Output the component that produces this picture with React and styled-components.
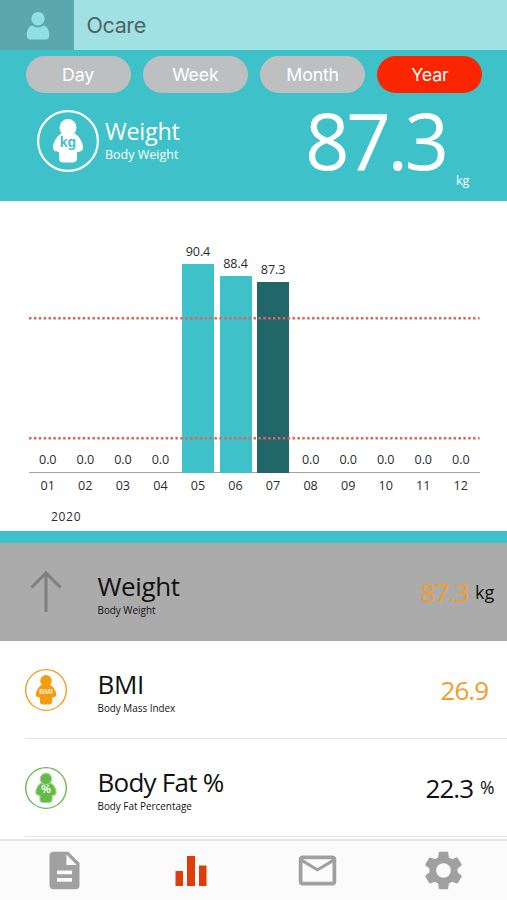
import React, { useState } from "react";
import styled, { createGlobalStyle } from "styled-components";

const tabs = ["Day", "Week", "Month", "Year"];

const months = [
  { month: "01", value: 0 },
  { month: "02", value: 0 },
  { month: "03", value: 0 },
  { month: "04", value: 0 },
  { month: "05", value: 90.4, height: 209 },
  { month: "06", value: 88.4, height: 197.5 },
  { month: "07", value: 87.3, height: 191 },
  { month: "08", value: 0 },
  { month: "09", value: 0 },
  { month: "10", value: 0 },
  { month: "11", value: 0 },
  { month: "12", value: 0 },
];

function BodyIcon({ size, color, textColor, label, fontSize, stroke, textY, halo }) {
  return (
    <svg width={size} height={size} viewBox="0 0 62 62">
      <circle cx="31" cy="31" r={31 - stroke / 2} fill="none" stroke={color} strokeWidth={stroke} />
      <g fill={color} stroke={halo} strokeWidth={halo ? 1.6 : 0}>
        <path d="M24 23.500C19 27 16 33 16 37.500c0 3 2 4.300 6 4.500V48c0 3 1.500 4.500 4.500 4.500h9c3 0 4.500-1.500 4.500-4.500v-6c4-.2 6-1.500 6-4.500 0-4.500-3-10.500-8-14z" />
        <circle cx="31" cy="17.500" r="8.500" />
      </g>
      <text
        x="31"
        y={textY}
        textAnchor="middle"
        fontFamily="Liberation Sans, sans-serif"
        fontWeight="700"
        fontSize={fontSize}
        fill={textColor}
      >
        {label}
      </text>
    </svg>
  );
}

function Ocare() {
  const [activeTab, setActiveTab] = useState("Year");

  return (
    <Screen>
      <GlobalStyle />
      <Header>
        <Avatar>
          <svg width="24" height="28" viewBox="0 0 24 28">
            <circle cx="12" cy="6.700" r="6.700" fill="#8fe0e4" />
            <path
              d="M6.500 13.500c3.300 2.600 7.700 2.600 11 0 3.700.6 5.700 4.500 5.700 9.500 0 3.200-1.200 4.500-3.700 4.500h-15c-2.500 0-3.700-1.300-3.700-4.500 0-5 2-8.900 5.700-9.500z"
              fill="#8fe0e4"
            />
          </svg>
        </Avatar>
        <UserName>Ocare</UserName>
      </Header>

      <Summary>
        <Tabs>
          {tabs.map((tab) => (
            <Tab key={tab} $active={activeTab === tab} onClick={() => setActiveTab(tab)}>
              {tab}
            </Tab>
          ))}
        </Tabs>
        <Current>
          <BodyIcon size={62} color="#fff" textColor="#3fc1c9" label="kg" fontSize={14} stroke={2.200} textY={36.500} />
          <CurrentName>
            <h2>Weight</h2>
            <p>Body Weight</p>
          </CurrentName>
          <CurrentValue>87.3</CurrentValue>
          <CurrentUnit>kg</CurrentUnit>
        </Current>
      </Summary>

      <Chart>
        <Plot>
          {months.map((item) => (
            <Column key={item.month}>
              <BarValue>{item.value.toFixed(1)}</BarValue>
              {item.value > 0 && <Bar $current={item.month === "07"} style={{ height: item.height }} />}
            </Column>
          ))}
          <Limits viewBox="0 0 451 237">
            <path d="M0 83.300H450.500M0 203.300H450.500" />
          </Limits>
        </Plot>
        <Axis>
          {months.map((item) => (
            <span key={item.month}>{item.month}</span>
          ))}
        </Axis>
        <YearLabel>2020</YearLabel>
      </Chart>

      <List>
        <Row $selected>
          <RowIcon>
            <svg width="32" height="42" viewBox="0 0 32 42" fill="none" stroke="#7f7f7f" strokeWidth="3">
              <path d="M16 41V2M1.500 16.500L16 2l14.500 14.500" />
            </svg>
          </RowIcon>
          <RowName>
            <h3>Weight</h3>
            <p>Body Weight</p>
          </RowName>
          <Value $warn>87.3</Value>
          <Unit>kg</Unit>
        </Row>
        <Row>
          <RowIcon>
            <BodyIcon size={42} color="#f39c12" textColor="#fde9c8" label="BMI" fontSize={11} stroke={2} textY={37} />
          </RowIcon>
          <RowName>
            <h3>BMI</h3>
            <p>Body Mass Index</p>
          </RowName>
          <Value $warn $noUnit>26.9</Value>
        </Row>
        <Row>
          <RowIcon>
            <BodyIcon size={42} color="#62bb46" textColor="#fff" label="%" fontSize={16} stroke={2} textY={38} halo="#a5d898" />
          </RowIcon>
          <RowName $tight>
            <h3>Body Fat %</h3>
            <p>Body Fat Percentage</p>
          </RowName>
          <Value>22.3</Value>
          <Unit $small>%</Unit>
        </Row>
      </List>

      <NavBar>
        <NavItem>
          <svg width="45" height="45" viewBox="0 0 24 24">
            <path d="M14 2H6c-1.100 0-2 .9-2 2v16c0 1.100.9 2 2 2h12c1.100 0 2-.9 2-2V8l-6-6zm2 16H8v-2h8v2zm0-4H8v-2h8v2zm-3-5V3.500L18.500 9H13z" />
          </svg>
        </NavItem>
        <NavItem $active>
          <svg width="32" height="32" viewBox="0 0 32 32">
            <path d="M.5 16h7.500v15H.5zM12 1h8v30h-8zM24 10.500h7.500V31H24z" />
          </svg>
        </NavItem>
        <NavItem>
          <svg width="45" height="45" viewBox="0 0 24 24">
            <path d="M20 4H4c-1.100 0-2 .9-2 2v12c0 1.100.9 2 2 2h16c1.100 0 2-.9 2-2V6c0-1.100-.9-2-2-2zm0 14H4V7.800l8 4.700 8-4.700V18zM12 10.800L4.300 6h15.400L12 10.800z" />
          </svg>
        </NavItem>
        <NavItem>
          <svg width="45" height="45" viewBox="0 0 24 24">
            <path
              fillRule="evenodd"
              d="M19.430 12.980c.04-.32.07-.64.07-.98s-.03-.66-.07-.98l2.110-1.650c.19-.15.24-.42.12-.64l-2-3.460c-.12-.22-.39-.3-.61-.22l-2.490 1c-.52-.4-1.080-.73-1.690-.98l-.38-2.650C14.460 2.180 14.250 2 14 2h-4c-.25 0-.46.18-.49.42l-.38 2.650c-.61.25-1.170.59-1.690.98l-2.490-1c-.23-.09-.49 0-.61.22l-2 3.460c-.13.22-.07.49.12.64l2.110 1.650c-.04.32-.07.65-.07.98s.03.66.07.98l-2.110 1.650c-.19.15-.24.42-.12.64l2 3.460c.12.22.39.3.61.22l2.490-1c.52.4 1.080.73 1.690.98l.38 2.650c.03.24.24.42.49.42h4c.25 0 .46-.18.49-.42l.38-2.650c.61-.25 1.170-.59 1.690-.98l2.490 1c.23.09.49 0 .61-.22l2-3.460c.12-.22.07-.49-.12-.64l-2.110-1.650zM12 8.100a3.900 3.900 0 1 0 0 7.800 3.900 3.900 0 0 0 0-7.800z"
            />
          </svg>
        </NavItem>
      </NavBar>
    </Screen>
  );
}

const GlobalStyle = createGlobalStyle`
  * {
    box-sizing: border-box;
  }
  body {
    margin: 0;
    background: white;
  }
  h2, h3, p {
    margin: 0;
    font-weight: 400;
  }
  svg {
    display: block;
    flex: none;
  }
`;

const Screen = styled.div`
  display: flex;
  flex-direction: column;
  width: 507px;
  height: 900px;
  overflow: hidden;
  background: white;
  color: #111;
  font-family: "Open Sans", "Noto Sans", sans-serif;
`;

const Header = styled.header`
  display: flex;
  flex: none;
  height: 50px;
  background: #a0e2e3;
`;

const Avatar = styled.div`
  display: flex;
  align-items: center;
  justify-content: center;
  width: 74px;
  padding: 2px 0 0 1px;
  background: #5ba7ae;
`;

const UserName = styled.div`
  padding-left: 12.5px;
  line-height: 51px;
  font-family: Inter, sans-serif;
  font-size: 21.5px;
  letter-spacing: -0.4px;
  color: #4f6467;
`;

const Summary = styled.section`
  flex: none;
  height: 150.5px;
  padding-top: 6px;
  background: #3fc1c9;
  color: white;
`;

const Tabs = styled.div`
  display: flex;
  gap: 12.3px;
  padding-left: 25.5px;
`;

const Tab = styled.button`
  width: 105px;
  height: 37px;
  padding: 0;
  border: none;
  border-radius: 19px;
  background: ${(props) => (props.$active ? "#fb2500" : "#bebfc1")};
  color: white;
  font-family: Inter, sans-serif;
  font-size: 17.8px;
  letter-spacing: -0.2px;
  cursor: pointer;
`;

const Current = styled.div`
  display: flex;
  align-items: flex-start;
  padding: 17px 0 0 37px;
`;

const CurrentName = styled.div`
  width: 200px;
  padding: 7px 0 0 6px;
  h2 {
    font-size: 23.5px;
    line-height: 28px;
    letter-spacing: -0.3px;
  }
  p {
    margin-top: 2px;
    font-size: 12.5px;
    line-height: 16px;
  }
`;

const CurrentValue = styled.div`
  width: 157px;
  margin-top: -10px;
  padding-left: 6px;
  font-size: 78px;
  line-height: 80px;
  letter-spacing: -3.4px;
`;

const CurrentUnit = styled.div`
  margin-top: 63px;
  font-size: 12.5px;
  line-height: 16px;
`;

const Chart = styled.section`
  flex: none;
  height: 330.5px;
  padding: 34px 27px 0 29px;
  color: #2b2b2b;
  font-size: 12.6px;
`;

const Plot = styled.div`
  position: relative;
  display: grid;
  grid-template-columns: repeat(12, 37.55px);
  height: 238.5px;
  border-bottom: 1.5px solid #a3a3a3;
`;

const Column = styled.div`
  display: flex;
  flex-direction: column;
  align-items: center;
  justify-content: flex-end;
`;

const BarValue = styled.span`
  line-height: 16px;
  margin-bottom: 4px;
  letter-spacing: -0.1px;
`;

const Bar = styled.div`
  width: 32px;
  margin-bottom: -1px;
  background: ${(props) => (props.$current ? "#216769" : "#3fc1c9")};
`;

// dotted lines over the bars for the healthy range
const Limits = styled.svg`
  position: absolute;
  top: 0;
  left: 0;
  width: 451px;
  height: 237px;
  fill: none;
  stroke: #e0635f;
  stroke-width: 2.4;
  stroke-dasharray: 2.5 2.38;
`;

const Axis = styled.div`
  display: grid;
  grid-template-columns: repeat(12, 37.55px);
  margin-top: 5px;
  line-height: 16px;
  text-align: center;
`;

const YearLabel = styled.div`
  margin: 15px 0 0 22px;
  font-size: 12px;
  line-height: 16px;
  font-weight: 500;
  letter-spacing: 0.7px;
`;

const List = styled.section`
  flex: 1;
  min-height: 0;
  border-top: 12px solid #3fc1c9;
  overflow: hidden;
`;

const Row = styled.div`
  display: flex;
  height: 98px;
  background: ${(props) => (props.$selected ? "#ababab" : "white")};
  & + & {
    background: white linear-gradient(#e4e4e4, #e4e4e4) 25px 97px / 482px 1px no-repeat;
  }
`;

const RowIcon = styled.div`
  display: flex;
  align-items: center;
  justify-content: center;
  width: 92px;
`;

const RowName = styled.div`
  flex: 1;
  padding: 27px 0 0 5.5px;
  h3 {
    font-size: 26px;
    line-height: 32px;
    letter-spacing: ${(props) => (props.$tight ? "-0.75px" : "-0.4px")};
  }
  p {
    margin-top: 1px;
    font-size: 9.9px;
    line-height: 14px;
  }
`;

const Value = styled.div`
  padding-top: 32px;
  margin-right: ${(props) => (props.$noUnit ? "19px" : "0")};
  font-size: 26px;
  line-height: 34px;
  letter-spacing: -1px;
  color: ${(props) => (props.$warn ? "#f39c2b" : "#111")};
`;

const Unit = styled.div`
  flex: none;
  width: ${(props) => (props.$small ? "34px" : "39px")};
  padding: ${(props) => (props.$small ? "34px 0 0 7px" : "35px 0 0 7px")};
  font-size: ${(props) => (props.$small ? "17.5px" : "18px")};
  line-height: 28px;
`;

const NavBar = styled.nav`
  display: grid;
  grid-template-columns: repeat(4, 126.5px);
  flex: none;
  height: 61px;
  padding-left: 1px;
  border-top: 2px solid #e6e6e6;
  background: #fbfbfb;
`;

const NavItem = styled.div`
  display: flex;
  align-items: center;
  justify-content: center;
  fill: ${(props) => (props.$active ? "#e03c0a" : "#a0a0a0")};
`;

export default Ocare;
